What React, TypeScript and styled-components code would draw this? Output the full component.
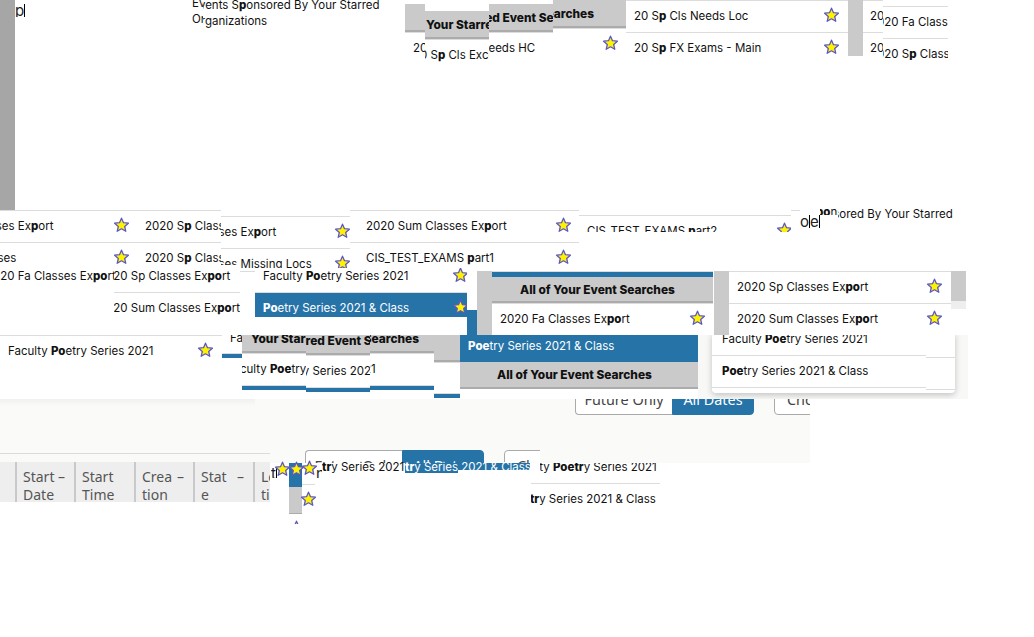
import React from 'react';
import styled, { createGlobalStyle } from 'styled-components';

const Global = createGlobalStyle`
  html, body { margin: 0; padding: 0; background: #fff; }
  body { font-family: Inter, "Liberation Sans", sans-serif; color: #111; }
`;

const BLUE = '#2673a8';
const GRAY = '#cacaca';
const LINE = '#dcdcdc';
const MENU_FONT = `11.5px/16px Inter, "Noto Sans", sans-serif`;

const Canvas = styled.div`
  position: relative;
  width: 1034px;
  height: 637px;
  overflow: hidden;
  background: #fff;
`;

const Tile = styled.div<{ $x: number; $y: number; $w: number; $h: number; $bg?: string }>`
  position: absolute;
  left: ${p => p.$x}px;
  top: ${p => p.$y}px;
  width: ${p => p.$w}px;
  height: ${p => p.$h}px;
  overflow: hidden;
  background: ${p => p.$bg || 'transparent'};
`;

const Sheet = styled.div<{ $dx: number; $dy: number }>`
  width: max-content;
  margin-left: ${p => p.$dx}px;
  margin-top: ${p => p.$dy}px;
`;

const Row = styled.div<{ $active?: boolean; $h?: number; $w?: number; $pl?: number }>`
  box-sizing: border-box;
  display: flex;
  align-items: center;
  justify-content: space-between;
  width: ${p => p.$w ?? 222}px;
  height: ${p => p.$h ?? 32}px;
  padding: 0 9px ${p => ((p.$h ?? 32) > 20 ? 1 : 0)}px ${p => p.$pl ?? 8}px;
  border-top: 1px solid ${LINE};
  background: ${p => (p.$active ? BLUE : '#fff')};
  color: ${p => (p.$active ? '#fff' : '#111')};
  font: ${MENU_FONT};
  white-space: nowrap;
  overflow: hidden;
  b { font-weight: 800; }
  svg { margin-top: -2px; flex: none; }
`;

const Head = styled.div<{ $h?: number; $w?: number; $pad: number }>`
  box-sizing: border-box;
  width: ${p => p.$w ?? 240}px;
  height: ${p => p.$h ?? 28}px;
  padding-left: ${p => p.$pad}px;
  line-height: ${p => (p.$h ?? 28) - 1}px;
  background: ${GRAY};
  border-bottom: 2px solid #ababab;
  color: #111;
  font-family: Inter, "Noto Sans", sans-serif;
  font-size: 11.9px;
  font-weight: 800;
  white-space: nowrap;
`;

const Prose = styled.div<{ $w?: number }>`
  width: ${p => p.$w ?? 190}px;
  font: ${MENU_FONT};
  color: #111;
  b { font-weight: 800; }
`;

const Loose = styled.div<{ $white?: boolean }>`
  font: ${MENU_FONT};
  color: ${p => (p.$white ? '#fff' : '#111')};
  white-space: nowrap;
  b { font-weight: 800; }
`;

const Typed = styled.div`
  display: inline-flex;
  align-items: center;
  height: 16px;
  font: 15px/16px Inter, "Noto Sans", sans-serif;
  color: #222;
`;

const Caret = styled.i`
  flex: none;
  display: inline-block;
  width: 1px;
  height: 15px;
  background: #000;
`;

const TableHead = styled.div`
  display: flex;
  height: 40px;
  background: #eee;
`;

const HeadCell = styled.div<{ $w: number }>`
  box-sizing: border-box;
  flex: none;
  width: ${p => p.$w}px;
  padding: 6px 9px 0 6px;
  border-right: 2px solid #c9c9c9;
  font: 14px/18px "Noto Sans", sans-serif;
  color: #555;
  &:last-child { border-right: 0; }
`;

const Sort = styled.div`
  display: flex;
  justify-content: space-between;
`;

const Toggle = styled.div`
  display: flex;
  align-items: stretch;
  width: max-content;
  height: 31px;
`;

const ToggleButton = styled.div<{ $on?: boolean; $w: number; $ml?: number; $left?: boolean; $pl?: number }>`
  box-sizing: border-box;
  flex: none;
  width: ${p => p.$w}px;
  margin-left: ${p => p.$ml ?? 0}px;
  padding-left: ${p => p.$pl ?? 0}px;
  border: 1px solid ${p => (p.$on ? BLUE : '#aaa')};
  border-right-width: ${p => (p.$left ? 0 : 1)}px;
  border-radius: ${p => (p.$left ? '4px 0 0 4px' : p.$on ? '0 4px 4px 0' : '4px')};
  background: ${p => (p.$on ? BLUE : '#fff')};
  color: ${p => (p.$on ? '#fff' : '#444')};
  font: 14.4px/29px "Noto Sans", sans-serif;
  text-align: ${p => (p.$pl ? 'left' : 'center')};
  white-space: nowrap;
`;

const Popup = styled.div`
  box-sizing: border-box;
  width: 243px;
  height: 60px;
  margin: -2px 0 0 14px;
  background: #fff;
  border-radius: 0 0 4px 4px;
  box-shadow: 0 2px 6px rgba(0, 0, 0, 0.22);
`;

const Fade = styled.div`
  height: 100%;
  background: linear-gradient(#f0f0ee, #fafaf9);
`;

const Star = ({ size = 16 }: { size?: number }) => (
  <svg width={size} height={size} viewBox="-0.5 0 16 16">
    <path
      d="M8 1.2l2 4.5 4.9.5-3.7 3.3 1.1 4.8L8 11.8l-4.3 2.5 1.1-4.8L1.1 6.2 6 5.7z"
      fill="#fff200"
      stroke="#5b57c9"
      strokeWidth="1.3"
      strokeLinejoin="round"
    />
  </svg>
);

const Label = ({ text }: { text: string }) => (
  <span>
    {text.split('*').map((part, i) => (i % 2 ? <b key={i}>{part}</b> : <React.Fragment key={i}>{part}</React.Fragment>))}
  </span>
);

type Item =
  | { t: 'row'; label?: string; star?: boolean; active?: boolean; h?: number; w?: number; pl?: number }
  | { t: 'head'; label?: string; pad?: number; h?: number; w?: number };

type Frag = { x: number; y: number; w: number; h: number; ox: number; oy: number; bg?: string; items: Item[] };

const r = (label: string, star = true, extra: Partial<Extract<Item, { t: 'row' }>> = {}): Item => ({ t: 'row', label, star, ...extra });
const head = (pad: number, label = 'Your Starred Event Searches', h?: number, w?: number): Item => ({ t: 'head', label, pad, h, w });
const bar = (h: number): Item => ({ t: 'row', active: true, h });

const stack = (oy: number, x: number, w: number, h: number, pl = 8): Frag => ({
  x, y: 335, w, h, ox: 222, oy, bg: '#fff',
  items: [
    head(29, 'Your Starred Event Searches', 27, 260),
    r('Faculty *Poe*try Series 2021', false, { w: 260, pl }),
    { t: 'row', active: true, h: 5, w: 260 },
  ],
});

const menus: Frag[] = [
  // top row of starred searches
  { x: 405, y: 4, w: 20, h: 51, ox: 405, oy: 4, bg: '#fff', items: [head(21, ''), r('20 S*p* Cls Exceeds HC', false)] },
  { x: 425, y: 11, w: 64, h: 51, ox: 405, oy: 11, bg: '#fff', items: [head(21), r('20 S*p* Cls Exceeds HC', false)] },
  { x: 489, y: 4, w: 64, h: 51, ox: 405, oy: 4, bg: '#fff', items: [head(21), r('20 S*p* Cls Exceeds HC', false)] },
  { x: 553, y: 0, w: 73, h: 56, ox: 405, oy: 0, bg: '#fff', items: [head(21), r('20 S*p* Cls Exceeds HC')] },
  { x: 626, y: 0, w: 222, h: 56, ox: 626, oy: 0, items: [r('20 S*p* Cls Needs Loc'), r('20 S*p* FX Exams - Main')] },
  { x: 863, y: 0, w: 20, h: 56, ox: 862, oy: 0, items: [r('2020 Fa Classes Export'), r('2020 S*p* Classes Export')] },
  { x: 883, y: 6, w: 65, h: 54, ox: 862, oy: 6, items: [r('2020 Fa Classes Export'), r('2020 S*p* Classes Export')] },
  // middle row
  { x: 0, y: 210, w: 135, h: 55, ox: -84, oy: 210, items: [r('2020 Fa Classes Ex*p*ort'), r('2020 S*p* Classes')] },
  { x: 135, y: 210, w: 86, h: 55, ox: 135, oy: 210, items: [r('2020 S*p* Classes Ex*p*ort', false, { pl: 10 }), r('2020 S*p* Classes Missing Locs', false, { pl: 10 })] },
  { x: 221, y: 216, w: 129, h: 52, ox: 137, oy: 216, items: [r('2020 S*p* Classes Ex*p*ort'), r('2020 S*p* Classes Missing Locs')] },
  { x: 350, y: 210, w: 229, h: 61, ox: 349, oy: 210, items: [r('2020 Sum Classes Ex*p*ort', true, { w: 231, pl: 17 }), r('CIS_TEST_EXAMS *p*art1', true, { w: 231, pl: 17 })] },
  { x: 579, y: 215, w: 212, h: 17, ox: 579, oy: 215, items: [r('CIS_TEST_EXAMS *p*art2')] },
  // lower band
  { x: 0, y: 265, w: 114, h: 70, ox: -22, oy: 260, bg: '#fff', items: [r('2020 Fa Classes Ex*po*rt', false)] },
  { x: 114, y: 265, w: 126, h: 70, ox: 91, oy: 260, bg: '#fff', items: [r('2020 Sp Classes Ex*po*rt', false), r('2020 Sum Classes Ex*po*rt', false)] },
  { x: 255, y: 268, w: 212, h: 49, ox: 255, oy: 260, bg: '#fff', items: [r('Faculty *Po*etry Series 2021'), r('*Po*etry Series 2021 & Class', true, { active: true })] },
  { x: 492, y: 271, w: 221, h: 64, ox: 492, oy: 271, bg: '#fff', items: [bar(6), head(28, 'All of Your Event Searches', 26), r('2020 Fa Classes Ex*po*rt')] },
  { x: 729, y: 271, w: 222, h: 64, ox: 729, oy: 271, bg: '#fff', items: [r('2020 Sp Classes Ex*po*rt'), r('2020 Sum Classes Ex*po*rt')] },
  { x: 0, y: 335, w: 222, h: 64, ox: 0, oy: 335, bg: '#fff', items: [r('Faculty *Po*etry Series 2021')] },
  { x: 222, y: 335, w: 20, h: 64, ox: 222, oy: 322, bg: '#fff', items: [r('Faculty *Poe*try Series 2021', false, { h: 31 }), bar(5)] },
  stack(326, 242, 64, 64, 5),
  stack(328, 306, 64, 64),
  stack(326, 370, 64, 64),
  { x: 434, y: 335, w: 26, h: 64, ox: 222, oy: 335, bg: '#fff', items: [head(29, '', 27, 260), r('', false, { w: 260, h: 31 }), { t: 'row', active: true, h: 5, w: 260 }] },
  { x: 460, y: 335, w: 238, h: 64, ox: 460, oy: 330, bg: '#fff', items: [r('*Poe*try Series 2021 & Class', false, { active: true, w: 238 }), head(37, 'All of Your Event Searches', 27, 238)] },
];

const plain: [number, number, number, number, string][] = [
  [0, 0, 15, 210, '#a6a6a6'],
  [848, 0, 15, 56, GRAY],
  [791, 210, 9, 1, LINE],
  [240, 271, 15, 1, LINE],
  [255, 317, 212, 18, '#fff'],
  [467, 310, 10, 25, BLUE],
  [477, 271, 15, 64, GRAY],
  [714, 271, 15, 64, GRAY],
  [951, 271, 15, 30, GRAY],
  [951, 301, 15, 8, '#eeeeee'],
  [0, 453, 270, 1, LINE],
  [289, 463, 13, 24, BLUE],
  [289, 487, 13, 26, GRAY],
  [289, 513, 13, 1, '#ababab'],
  [302, 484, 13, 1, LINE],
];

const stars: [number, number][] = [
  [274, 461],
  [288, 461],
  [301, 460],
  [300, 491],
];

const Frags = ({ list }: { list: Frag[] }) => (
  <>
    {list.map((f, i) => (
      <Tile key={i} $x={f.x} $y={f.y} $w={f.w} $h={f.h} $bg={f.bg}>
        <Sheet $dx={f.ox - f.x} $dy={f.oy - f.y}>
          {f.items.map((it, j) =>
            it.t === 'head' ? (
              <Head key={j} $pad={it.pad ?? 0} $h={it.h} $w={it.w}>{it.label}</Head>
            ) : (
              <Row key={j} $active={it.active} $h={it.h} $w={it.w} $pl={it.pl}>
                {it.label ? <Label text={it.label} /> : <span />}
                {it.star && <Star />}
              </Row>
            )
          )}
        </Sheet>
      </Tile>
    ))}
  </>
);

const SPONSORED = 'Events S*p*onsored By Your Starred Organizations';
const SPONSORED2 = 'Events S*po*nsored By Your Starred Organizations';

const Buttons = () => (
  <Toggle>
    <ToggleButton $w={97} $left>Future Only</ToggleButton>
    <ToggleButton $w={82} $on>All Dates</ToggleButton>
    <ToggleButton $w={90} $ml={20} $pl={12}>Choose</ToggleButton>
  </Toggle>
);

export default function App() {
  return (
    <Canvas>
      <Global />

      {/* page background strip with the date toggle */}
      <Tile $x={0} $y={399} $w={810} $h={64} $bg="#fafaf9" />
      <Tile $x={0} $y={399} $w={255} $h={7}><Fade /></Tile>
      <Tile $x={575} $y={399} $w={235} $h={17}>
        <Sheet $dx={0} $dy={-15}><Buttons /></Sheet>
      </Tile>
      <Tile $x={305} $y={450} $w={235} $h={13}>
        <Buttons />
      </Tile>

      {/* drop-down shadow */}
      <Tile $x={698} $y={335} $w={270} $h={64} $bg="#f8f8f7">
        <Popup />
      </Tile>

      {plain.map(([x, y, w, h, c], i) => (
        <Tile key={i} $x={x} $y={y} $w={w} $h={h} $bg={c} />
      ))}

      <Frags list={menus} />
      <Frags
        list={[
          { x: 712, y: 335, w: 214, h: 56, ox: 712, oy: 323, items: [r('Faculty *Poe*try Series 2021', false, { w: 214, pl: 10 }), r('*Poe*try Series 2021 & Class', false, { w: 214, pl: 10 }), r('', false, { w: 214, h: 4 })] },
          { x: 926, y: 335, w: 29, h: 56, ox: 926, oy: 325, items: [r('', false, { w: 29 }), r('', false, { w: 29 }), r('', false, { w: 29, h: 4 })] },
          { x: 540, y: 463, w: 120, h: 19, ox: 502, oy: 451, items: [r('Faculty *Poetr*y Series 2021', false, { w: 160 })] },
          { x: 531, y: 482, w: 129, h: 26, ox: 501, oy: 483, items: [r('Poe*tr*y Series 2021 & Class', false, { w: 160 })] },
        ]}
      />

      {/* column headers of the table below */}
      <Tile $x={0} $y={462} $w={270} $h={40}>
        <TableHead>
          <HeadCell $w={15} />
          <HeadCell $w={59}><Sort><span>Start</span><span>–</span></Sort>Date</HeadCell>
          <HeadCell $w={60}>Start Time</HeadCell>
          <HeadCell $w={59}><Sort><span>Crea</span><span>–</span></Sort>tion</HeadCell>
          <HeadCell $w={60}><Sort><span>Stat</span><span>–</span></Sort>e</HeadCell>
          <HeadCell $w={60}>Lo<br />tio</HeadCell>
        </TableHead>
      </Tile>

      {/* search fragments */}
      <Tile $x={15} $y={0} $w={12} $h={17}>
        <Typed>p<Caret /></Typed>
      </Tile>
      <Tile $x={192} $y={0} $w={11} $h={30}>
        <Sheet $dx={0} $dy={-5}><Prose><Label text={SPONSORED} /></Prose></Sheet>
      </Tile>
      <Tile $x={203} $y={0} $w={190} $h={30}>
        <Sheet $dx={-11} $dy={-3}><Prose><Label text={SPONSORED} /></Prose></Sheet>
      </Tile>
      <Tile $x={820} $y={205} $w={18} $h={10}>
        <Sheet $dx={-51} $dy={-1}><Prose><Label text={SPONSORED2} /></Prose></Sheet>
      </Tile>
      <Tile $x={838} $y={205} $w={115} $h={20}>
        <Sheet $dx={-73} $dy={1}><Prose><Label text={SPONSORED2} /></Prose></Sheet>
      </Tile>
      <Tile $x={800} $y={211} $w={21} $h={17}>
        <Typed>o<Caret />e<Caret /></Typed>
      </Tile>

      {/* stray glyphs and stars around the table */}
      <Tile $x={271} $y={463} $w={6} $h={15}>
        <Typed>t<Caret /></Typed>
      </Tile>
      <Tile $x={316} $y={463} $w={6} $h={15}>
        <Typed>n<Caret /></Typed>
      </Tile>
      {stars.map(([x, y], i) => (
        <Tile key={i} $x={x} $y={y} $w={16} $h={16}><Star /></Tile>
      ))}
      <Tile $x={288} $y={520} $w={16} $h={4}><Star /></Tile>

      <Tile $x={405} $y={463} $w={53} $h={10} $bg={BLUE} />
      <Tile $x={458} $y={463} $w={72} $h={7} $bg={BLUE} />
      <Tile $x={322} $y={459} $w={84} $h={16}>
        <Loose><Label text="*tr*y Series 2021" /></Loose>
      </Tile>
      <Tile $x={405} $y={459} $w={125} $h={16}>
        <Loose $white><Label text="*tr*y Series 2021 & Class" /></Loose>
      </Tile>
    </Canvas>
  );
}
